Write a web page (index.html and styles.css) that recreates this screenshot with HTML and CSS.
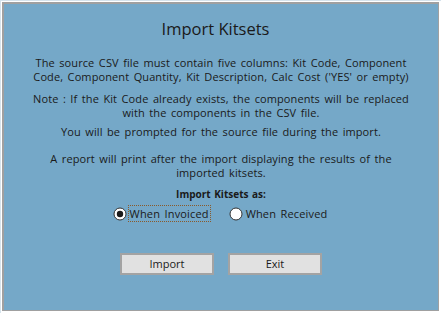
FILE: index.html
```html
<!DOCTYPE html>
<html>
<head>
<meta charset="utf-8">
<link rel="stylesheet" href="styles.css">
</head>
<body>
<div class="frame">
  <div class="panel">
    <h1 class="title">Import Kitsets</h1>
    <p class="para p1">The source CSV file must contain five columns: Kit Code, Component<br>Code, Component Quantity, Kit Description, Calc Cost ('YES' or empty)</p>
    <p class="para p2">Note : If the Kit Code already exists, the components will be replaced<br>with the components in the CSV file.</p>
    <p class="para p3">You will be prompted for the source file during the import.</p>
    <p class="para p4">A report will print after the import displaying the results of the<br>imported kitsets.</p>
    <p class="para group-label">Import Kitsets as:</p>
    <div class="radios">
      <div class="radio">
        <svg class="dot" width="14" height="14" viewBox="0 0 14 14"><circle cx="7" cy="7" r="6" fill="#fff" stroke="#333" stroke-width="1"/><circle cx="7" cy="7" r="3.2" fill="#1a1a1a"/></svg>
        <span class="rlabel focused">When Invoiced</span>
      </div>
      <div class="radio">
        <svg class="dot" width="14" height="14" viewBox="0 0 14 14"><circle cx="7" cy="7" r="6" fill="#fff" stroke="#333" stroke-width="1"/></svg>
        <span class="rlabel">When Received</span>
      </div>
    </div>
    <div class="buttons">
      <div class="btn">Import</div>
      <div class="btn">Exit</div>
    </div>
  </div>
</div>
</body>
</html>
```
FILE: styles.css
```css
html, body {
  margin: 0;
  padding: 0;
  background: #ffffff;
}
body {
  width: 441px;
  height: 313px;
  overflow: hidden;
  font-family: "Open Sans", "Noto Sans", sans-serif;
  color: #1a1a1a;
}
.frame {
  box-sizing: border-box;
  width: 441px;
  height: 313px;
  border-top: 1px solid #d6e3ec;
  border-left: 1px solid #d6e3ec;
  padding: 1px 2px 2px 1px;
}
.panel {
  box-sizing: border-box;
  height: 100%;
  background: #75a8c8;
  border-top: 2px solid #a0a0a0;
  border-left: 2px solid #a0a0a0;
  border-right: 1px solid #a0a0a0;
  border-bottom: 1px solid #a0a0a0;
  display: flex;
  flex-direction: column;
  align-items: center;
  padding-top: 13px;
}
.title {
  margin: 0 11px 0 0;
  font-size: 16.5px;
  line-height: 24px;
  font-weight: normal;
  text-align: center;
}
.para {
  margin: 0;
  font-size: 11px;
  line-height: 14px;
  text-align: center;
  white-space: nowrap;
  word-spacing: 1.5px;
  letter-spacing: 0.1px;
}
.p1 { margin-top: 15px; }
.p2 { margin-top: 8px; }
.p3 { margin-top: 5px; }
.p4 { margin-top: 13px; }
.group-label {
  margin-top: 7px;
  font-weight: bold;
  font-size: 10px;
  word-spacing: 1px;
  letter-spacing: 0;
}
.radios {
  display: flex;
  gap: 18px;
  margin-top: 4px;
  margin-left: 0;
}
.radio {
  display: flex;
  align-items: center;
  height: 17px;
  gap: 1px;
}
.dot {
  display: block;
}
.rlabel {
  font-size: 11px;
  line-height: 15px;
  padding: 0 1px;
  letter-spacing: 0.15px;
  word-spacing: 1.5px;
  border: 1px dotted transparent;
}
.rlabel.focused {
  border-color: #8a5a2a;
}
.buttons {
  display: flex;
  gap: 14px;
  margin-top: 31px;
}
.btn {
  box-sizing: border-box;
  width: 94px;
  height: 22px;
  background: #e1e1e1;
  border: 2px solid #a3a3a3;
  font-size: 11px;
  line-height: 18px;
  text-align: center;
}
```
